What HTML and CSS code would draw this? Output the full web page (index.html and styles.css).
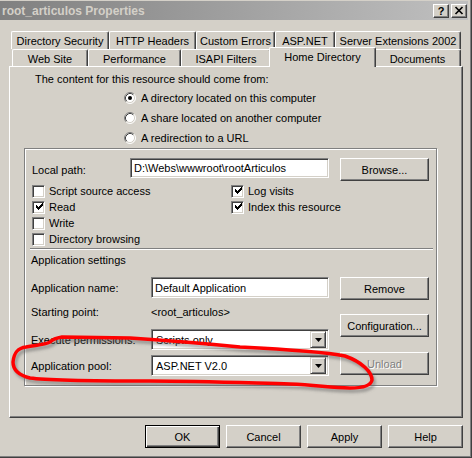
FILE: index.html
```html
<!DOCTYPE html>
<html>
<head>
<meta charset="utf-8">
<title>root_articulos Properties</title>
<link rel="stylesheet" href="styles.css">
</head>
<body>
<div class="window">
  <div class="titlebar">
    <span class="title">root_articulos Properties</span>
    <div class="tbtns">
      <div class="tbtn help">?</div>
      <div class="tbtn"><svg width="10" height="9" viewBox="0 0 10 9"><path d="M1.5 1 L8.5 8 M8.5 1 L1.5 8" stroke="#000" stroke-width="1.7" fill="none"/></svg></div>
    </div>
  </div>

  <div class="tabs">
    <div class="tabrow back">
      <div class="tab" style="width:98px">Directory Security</div>
      <div class="tab" style="width:87px">HTTP Headers</div>
      <div class="tab" style="width:79px">Custom Errors</div>
      <div class="tab" style="width:60px">ASP.NET</div>
      <div class="tab" style="width:126px">Server Extensions 2002</div>
    </div>
    <div class="tabrow front">
      <div class="tab" style="width:76px">Web Site</div>
      <div class="tab" style="width:93px">Performance</div>
      <div class="tab" style="width:90px">ISAPI Filters</div>
      <div class="tab active" style="width:107px">Home Directory</div>
      <div class="tab" style="width:87px">Documents</div>
    </div>
  </div>

  <div class="panel">
    <div class="intro">The content for this resource should come from:</div>
    <div class="radios">
      <div class="radio-row">
        <svg class="radio" width="12" height="12" viewBox="0 0 12 12"><circle cx="6" cy="6" r="5" fill="#fff"/><path d="M2.11 9.89 A5.5 5.5 0 0 1 9.89 2.11" stroke="#808080" fill="none"/><path d="M9.89 2.11 A5.5 5.5 0 0 1 2.11 9.89" stroke="#fff" fill="none"/><path d="M2.82 9.18 A4.5 4.5 0 0 1 9.18 2.82" stroke="#404040" fill="none"/><path d="M9.18 2.82 A4.5 4.5 0 0 1 2.82 9.18" stroke="#d4d0c8" fill="none"/><circle cx="6" cy="6" r="2" fill="#000"/></svg>
        <span>A directory located on this computer</span>
      </div>
      <div class="radio-row">
        <svg class="radio" width="12" height="12" viewBox="0 0 12 12"><circle cx="6" cy="6" r="5" fill="#fff"/><path d="M2.11 9.89 A5.5 5.5 0 0 1 9.89 2.11" stroke="#808080" fill="none"/><path d="M9.89 2.11 A5.5 5.5 0 0 1 2.11 9.89" stroke="#fff" fill="none"/><path d="M2.82 9.18 A4.5 4.5 0 0 1 9.18 2.82" stroke="#404040" fill="none"/><path d="M9.18 2.82 A4.5 4.5 0 0 1 2.82 9.18" stroke="#d4d0c8" fill="none"/></svg>
        <span>A share located on another computer</span>
      </div>
      <div class="radio-row">
        <svg class="radio" width="12" height="12" viewBox="0 0 12 12"><circle cx="6" cy="6" r="5" fill="#fff"/><path d="M2.11 9.89 A5.5 5.5 0 0 1 9.89 2.11" stroke="#808080" fill="none"/><path d="M9.89 2.11 A5.5 5.5 0 0 1 2.11 9.89" stroke="#fff" fill="none"/><path d="M2.82 9.18 A4.5 4.5 0 0 1 9.18 2.82" stroke="#404040" fill="none"/><path d="M9.18 2.82 A4.5 4.5 0 0 1 2.82 9.18" stroke="#d4d0c8" fill="none"/></svg>
        <span>A redirection to a URL</span>
      </div>
    </div>

    <div class="group">
      <div class="pathrow">
        <span class="plabel">Local path:</span>
        <div class="field pathfield">D:\Webs\wwwroot\rootArticulos</div>
        <div class="btn sidebtn">Browse...</div>
      </div>

      <div class="checks">
        <div class="chk"><span class="box"></span><span>Script source access</span></div>
        <div class="chk"><span class="box"><svg width="9" height="9" viewBox="0 0 9 9" shape-rendering="crispEdges"><path d="M1 2h1v3h-1z M2 3h1v3h-1z M3 4h1v3h-1z M4 3h1v3h-1z M5 2h1v3h-1z M6 1h1v3h-1z M7 0h1v3h-1z" fill="#000"/></svg></span><span>Log visits</span></div>
        <div class="chk"><span class="box"><svg width="9" height="9" viewBox="0 0 9 9" shape-rendering="crispEdges"><path d="M1 2h1v3h-1z M2 3h1v3h-1z M3 4h1v3h-1z M4 3h1v3h-1z M5 2h1v3h-1z M6 1h1v3h-1z M7 0h1v3h-1z" fill="#000"/></svg></span><span>Read</span></div>
        <div class="chk"><span class="box"><svg width="9" height="9" viewBox="0 0 9 9" shape-rendering="crispEdges"><path d="M1 2h1v3h-1z M2 3h1v3h-1z M3 4h1v3h-1z M4 3h1v3h-1z M5 2h1v3h-1z M6 1h1v3h-1z M7 0h1v3h-1z" fill="#000"/></svg></span><span>Index this resource</span></div>
        <div class="chk"><span class="box"></span><span>Write</span></div>
        <div></div>
        <div class="chk"><span class="box"></span><span>Directory browsing</span></div>
        <div></div>
      </div>

      <div class="sep"></div>
      <div class="appset">Application settings</div>

      <div class="appgrid">
        <div class="appleft">
          <div class="arow"><span class="alabel">Application name:</span><div class="field appfield">Default Application</div></div>
          <div class="arow textrow"><span class="alabel">Starting point:</span><span>&lt;root_articulos&gt;</span></div>
          <div class="arow execrow"><span class="alabel">Execute permissions:</span>
            <div class="field combo"><span>Scripts only</span><div class="dropbtn"><svg width="7" height="4" viewBox="0 0 7 4"><path d="M0 0h7L3.5 4z" fill="#000"/></svg></div></div>
          </div>
          <div class="arow poolrow"><span class="alabel">Application pool:</span>
            <div class="field combo"><span>ASP.NET V2.0</span><div class="dropbtn"><svg width="7" height="4" viewBox="0 0 7 4"><path d="M0 0h7L3.5 4z" fill="#000"/></svg></div></div>
          </div>
        </div>
        <div class="appright">
          <div class="btn sidebtn">Remove</div>
          <div class="btn sidebtn config">Configuration...</div>
          <div class="btn sidebtn unload disabled">Unload</div>
        </div>
      </div>
    </div>
  </div>

  <div class="actions">
    <div class="btn dlgbtn default">OK</div>
    <div class="btn dlgbtn">Cancel</div>
    <div class="btn dlgbtn">Apply</div>
    <div class="btn dlgbtn">Help</div>
  </div>

  <svg class="markup" width="472" height="458" viewBox="0 0 472 458">
    <defs><filter id="blur" x="-10%" y="-10%" width="120%" height="140%"><feGaussianBlur stdDeviation="1.5"/></filter></defs>
    <path d="M13,362 C14,352 18,348 26,347 C36,345 44,345 50,342 C53,339 56,338 62,337 L130,338 C160,340 200,343 240,347 C280,349 320,351 345,356 C362,362 372,372 372,380 C371,386 362,388 350,388 C330,388 318,385 290,384 C250,383 200,381 150,381 C100,381 50,381 30,378 C18,375 13,370 13,362" transform="translate(2,3)" stroke="#606060" stroke-opacity="0.55" stroke-width="3.5" fill="none" filter="url(#blur)"/>
    <path d="M13,362 C14,352 18,348 26,347 C36,345 44,345 50,342 C53,339 56,338 62,337 L130,338 C160,340 200,343 240,347 C280,349 320,351 345,356 C362,362 372,372 372,380 C371,386 362,388 350,388 C330,388 318,385 290,384 C250,383 200,381 150,381 C100,381 50,381 30,378 C18,375 13,370 13,362" stroke="#ff0000" stroke-width="3.5" fill="none" stroke-linecap="round"/>
  </svg>
</div>
</body>
</html>
```

FILE: styles.css
```css
* { box-sizing: border-box; }

body {
  margin: 0;
  font: 11px "Liberation Sans", Arial, sans-serif;
  color: #000;
  background: #ffffff;
}

.window {
  position: relative;
  width: 472px;
  height: 458px;
  background: #d4d0c8;
  border-right: 1px solid #404040;
  border-bottom: 1px solid #404040;
  box-shadow: inset -1px -1px 0 #808080;
  padding: 1px 3px 0 0;
}

/* title bar */
.titlebar {
  height: 19px;
  background: linear-gradient(to right, #808080, #c0c0c0);
  display: flex;
  align-items: center;
  justify-content: space-between;
  padding: 0 1px 0 2px;
}
.title {
  font-weight: bold;
  color: #d4d0c8;
  font-size: 12px;
}
.tbtns { display: flex; gap: 2px; }
.tbtn {
  width: 16px;
  height: 14px;
  background: #d4d0c8;
  border: 1px solid;
  border-color: #fff #404040 #404040 #fff;
  box-shadow: inset -1px -1px 0 #808080;
  display: flex;
  align-items: center;
  justify-content: center;
  font-weight: bold;
  font-size: 11px;
  line-height: 12px;
}

/* tabs */
.tabs { margin-top: 11px; }
.tabrow { display: flex; }
.tabrow.back { margin-left: 11px; height: 18px; }
.tabrow.front { margin-left: 12px; height: 17px; }
.tab {
  height: 100%;
  background: #d4d0c8;
  border-left: 1px solid #fff;
  border-top: 1px solid #fff;
  border-right: 1px solid #404040;
  box-shadow: inset -1px 0 0 #808080;
  border-radius: 2px 2px 0 0;
  text-align: center;
  padding-top: 2px;
  line-height: 14px;
  white-space: nowrap;
}
.tab.active {
  position: relative;
  z-index: 2;
  height: 20px;
  margin: -2px -2px 0;
}

/* panel */
.panel {
  margin-left: 9px;
  width: 454px;
  height: 352px;
  border: 1px solid;
  border-color: #fff #404040 #404040 #fff;
  box-shadow: inset -1px -1px 0 #808080;
}
.intro {
  margin: 5px 0 0 25px;
  line-height: 14px;
}
.radios { margin: 2px 0 0 114px; }
.radio-row {
  height: 20px;
  display: flex;
  align-items: center;
  gap: 5px;
}
.radio { flex: none; }

/* group */
.group {
  margin-left: 14px;
  width: 413px;
  height: 238px;
  border: 1px solid #808080;
  box-shadow: 1px 1px 0 #fff, inset 1px 1px 0 #fff;
}
.pathrow {
  margin-top: 9px;
  padding-left: 7px;
  display: flex;
  align-items: center;
  height: 23px;
}
.plabel { width: 98px; }

.field {
  height: 21px;
  background: #fff;
  border: 1px solid;
  border-color: #808080 #fff #fff #808080;
  box-shadow: inset 1px 1px 0 #404040, inset -1px -1px 0 #d4d0c8;
  padding: 0 3px;
  display: flex;
  align-items: center;
  white-space: nowrap;
}
.pathfield { width: 199px; height: 20px; align-self: flex-start; }

.btn {
  height: 23px;
  background: #d4d0c8;
  border: 1px solid;
  border-color: #fff #404040 #404040 #fff;
  box-shadow: inset -1px -1px 0 #808080;
  display: flex;
  align-items: center;
  justify-content: center;
  white-space: nowrap;
}
.sidebtn { width: 89px; margin-left: 11px; }
.appright .sidebtn { margin-left: 0; }
.btn.disabled {
  color: #808080;
  text-shadow: 1px 1px 0 #fff;
}

.checks {
  margin-top: 2px;
  padding-left: 7px;
  display: grid;
  grid-template-columns: 199px 1fr;
  grid-auto-rows: 16px;
}
.chk {
  display: flex;
  align-items: center;
  gap: 4px;
}
.box {
  flex: none;
  width: 13px;
  height: 13px;
  background: #fff;
  border: 1px solid;
  border-color: #808080 #fff #fff #808080;
  box-shadow: inset 1px 1px 0 #404040, inset -1px -1px 0 #d4d0c8;
  display: flex;
  align-items: center;
  justify-content: center;
  padding: 1px 0 0 1px;
}
.box svg { display: block; }

.sep {
  margin: 1px 3px 0 5px;
  border-top: 1px solid #808080;
  border-bottom: 1px solid #fff;
}
.appset {
  margin: 3px 0 0 6px;
  line-height: 14px;
}

.appgrid {
  margin-top: 10px;
  display: flex;
}
.appleft {
  padding-left: 6px;
  width: 304px;
}
.arow {
  display: flex;
  align-items: center;
  height: 21px;
}
.alabel { width: 120px; flex: none; }
.appfield { width: 178px; }
.textrow { height: 14px; margin-top: 7px; }
.execrow { margin-top: 10px; }
.poolrow { margin-top: 5px; }

.combo {
  width: 178px;
  justify-content: space-between;
  padding: 2px 2px 2px 4px;
}
.dropbtn {
  width: 16px;
  height: 17px;
  background: #d4d0c8;
  border: 1px solid;
  border-color: #d4d0c8 #404040 #404040 #d4d0c8;
  box-shadow: inset 1px 1px 0 #fff, inset -1px -1px 0 #808080;
  display: flex;
  align-items: center;
  justify-content: center;
}
.dropbtn svg { display: block; }

.appright {
  margin-left: 11px;
  display: flex;
  flex-direction: column;
}
.config { margin-top: 14px; }
.unload { margin-top: 15px; }

/* dialog buttons */
.actions {
  margin-top: 7px;
  padding-right: 5px;
  display: flex;
  justify-content: flex-end;
  gap: 6px;
}
.dlgbtn { width: 75px; }
.btn.default {
  border: 1px solid #000;
  box-shadow: inset 1px 1px 0 #fff, inset -1px -1px 0 #404040, inset -2px -2px 0 #808080;
}

.markup {
  position: absolute;
  left: 0;
  top: 0;
  pointer-events: none;
}
```
